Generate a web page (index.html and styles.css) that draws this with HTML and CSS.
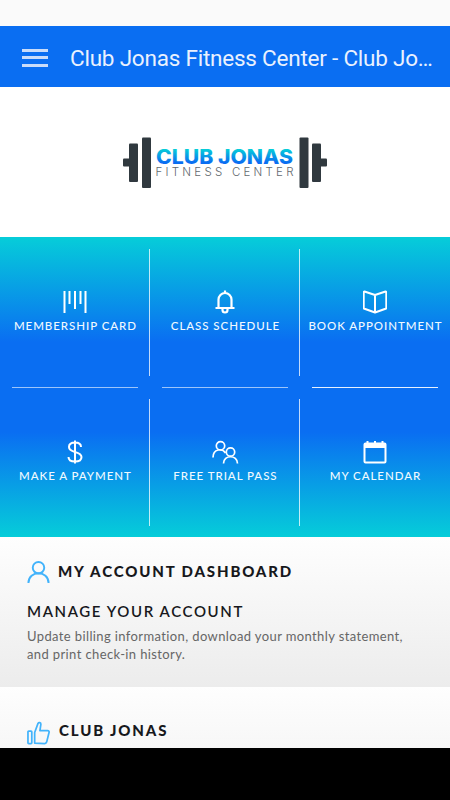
FILE: index.html
```
<!DOCTYPE html>
<html lang="en">
<head>
  <meta charset="UTF-8" />
  <title>Club Jonas Fitness Center</title>
  <meta name="viewport" content="width=device-width, initial-scale=1.0"/>
  <link rel="stylesheet" href="styles.css">
</head>
<body>

  <div class="status-bar"></div>

  <header>
    <button class="menu" aria-label="Menu"><span></span><span></span><span></span></button>
    <div class="title">Club Jonas Fitness Center - Club Jo…</div>
  </header>

  <div class="brand">
    <svg width="206" height="52" viewBox="0 0 206 52">
      <defs>
        <linearGradient id="brandFill" x1="0" y1="0" x2="0" y2="1">
          <stop offset="0.2" stop-color="#06cdd9"/>
          <stop offset="0.75" stop-color="#0a6ef2"/>
        </linearGradient>
      </defs>
      <g fill="#30393f">
        <rect x="1" y="21.500" width="8" height="8" rx="1"/>
        <rect x="7" y="6.500" width="9" height="38.500" rx="1"/>
        <rect x="20" y="0.500" width="9" height="50.500" rx="1"/>
        <rect x="177.500" y="0.500" width="9" height="50.500" rx="1"/>
        <rect x="190" y="6.500" width="9" height="38.500" rx="1"/>
        <rect x="197" y="21.500" width="8" height="8" rx="1"/>
      </g>
      <text class="brand-name" x="34" y="26.500" textLength="137" lengthAdjust="spacingAndGlyphs" fill="url(#brandFill)">CLUB JONAS</text>
      <text class="brand-sub" x="33.500" y="39" textLength="138">FITNESS CENTER</text>
    </svg>
  </div>

  <main>
    <nav class="tiles">
      <a class="tile">
        <svg viewBox="0 0 24 24"><path d="M1.500 1v22M6.500 1v13M12 1v18M17.500 1v13M22.500 1v22"/></svg>
        <span>Membership Card</span>
      </a>
      <a class="tile">
        <svg class="bell" viewBox="0 0 24 24"><path d="M5.500 18V9.500a6.500 6.500 0 0 1 13 0V18M2.500 18h19M12 .500v3M9.500 18.500v1.500a2.500 2.500 0 0 0 5 0v-1.500"/></svg>
        <span>Class Schedule</span>
      </a>
      <a class="tile">
        <svg viewBox="0 0 24 24"><path d="M12 5L1.500 1.500c-.5 0-.8.3-.8.8v15.500c0 .5.300.8.800 1L12 22.500l10.500-3.700c.5-.2.8-.5.8-1V2.300c0-.5-.3-.8-.8-.8zM12 5v17.500"/></svg>
        <span>Book Appointment</span>
      </a>
      <a class="tile">
        <svg viewBox="0 0 24 24"><path d="M18 7c0-3-2.500-4.500-6-4.500S6 4 6 7s2.500 4 6 5 6.500 2 6.500 5-2.500 4.500-6.500 4.500S5.500 20 5.500 17M12 .500v23"/></svg>
        <span>Make a Payment</span>
      </a>
      <a class="tile">
        <svg class="people" viewBox="0 0 28 24"><circle cx="9.500" cy="5.800" r="4.200"/><path d="M2 17.500c0-9 9.500-9.500 12.500-4.500"/><circle cx="19.500" cy="12" r="4.200"/><path d="M12.500 23.500c0-9 14-9 14 0"/></svg>
        <span>Free Trial Pass</span>
      </a>
      <a class="tile">
        <svg viewBox="0 0 24 24"><rect x="1.500" y="3.500" width="21" height="19" rx="1"/><path class="solid" d="M1 3h22v5H1z"/><path d="M4.500 1v3M12 1v3M19.500 1v3"/></svg>
        <span>My Calendar</span>
      </a>
    </nav>

    <section class="panel">
      <h2>
        <svg viewBox="0 0 24 24"><circle cx="12" cy="7.500" r="6"/><path d="M1.500 23.500c0-13.500 21-13.500 21 0"/></svg>
        <span>My Account Dashboard</span>
      </h2>
      <h3>Manage Your Account</h3>
      <p>Update billing information, download your monthly statement,<br>and print check-in history.</p>
    </section>

    <section class="panel club">
      <h2>
        <svg viewBox="0 0 24 24"><rect x="1" y="10" width="4" height="13" rx=".8"/><path d="M8 22.500V11.500L11.500 2c.8-1.500 3-1 3 .8L13.500 9.500h8c1.300 0 1.800.8 1.500 2l-2.500 10c-.3 1-1 1.500-2 1.500z"/></svg>
        <span>Club Jonas</span>
      </h2>
    </section>
  </main>

  <footer></footer>

</body>
</html>
```
FILE: styles.css
```
* {
  box-sizing: border-box;
}

body {
  margin: 0;
  height: 800px;
  display: flex;
  flex-direction: column;
  overflow: hidden;
  background: #fff;
  font-family: Lato, "Open Sans", sans-serif;
}

.status-bar {
  height: 26px;
  flex-shrink: 0;
  background: #fafafa;
}

header {
  height: 61px;
  flex-shrink: 0;
  display: flex;
  align-items: center;
  padding: 2px 10px 0 22px;
  background: #0a6ef2;
}

.menu {
  width: 26px;
  padding: 0;
  border: none;
  background: none;
  display: flex;
  flex-direction: column;
  gap: 4.5px;
}

.menu span {
  height: 3px;
  background: #c9dcfa;
}

.title {
  flex: 1;
  min-width: 0;
  margin-left: 22px;
  font: 22.5px Roboto, sans-serif;
  letter-spacing: -0.22px;
  color: #e9f1fe;
  white-space: nowrap;
}

.brand {
  height: 150px;
  flex-shrink: 0;
  display: flex;
  justify-content: center;
  align-items: center;
  padding-top: 1px;
}

.brand-name {
  font: 800 20px Inter, sans-serif;
}

.brand-sub {
  font: 300 11.5px Inter, sans-serif;
  fill: #62686d;
}

main {
  flex: 1;
  min-height: 0;
  overflow: hidden;
}

.tiles {
  display: grid;
  grid-template-columns: repeat(3, 1fr);
  grid-auto-rows: 150px;
  background: linear-gradient(#06cdd9, #0a6ef2 35%, #0a6ef2 65%, #06cdd9);
}

.tile {
  position: relative;
  display: flex;
  flex-direction: column;
  align-items: center;
  padding-top: 53px;
  color: #f0f9ff;
}

.tile svg {
  width: 24px;
  height: 24px;
  fill: none;
  stroke: #fff;
  stroke-width: 2;
  stroke-linejoin: round;
}

.tile .bell {
  stroke-width: 2.2;
}

.tile .people {
  width: 28px;
  stroke-width: 1.7;
}

.tile .solid {
  fill: #fff;
  stroke: none;
}

.tile span {
  margin-top: 4px;
  font-size: 11.5px;
  line-height: 16px;
  font-weight: 500;
  letter-spacing: 0.95px;
  margin-right: -0.95px;
  text-transform: uppercase;
  white-space: nowrap;
}

/* dividers between tiles */
.tile:not(:nth-child(3n))::after {
  content: "";
  position: absolute;
  top: 12px;
  right: 0;
  width: 1px;
  height: 127px;
  background: rgba(255, 255, 255, 0.75);
}

.tile:nth-child(-n+3)::before {
  content: "";
  position: absolute;
  left: 12px;
  bottom: -1px;
  width: 126px;
  height: 1px;
  background: rgba(255, 255, 255, 0.6);
}

.tile:nth-child(3)::before {
  background: rgba(255, 255, 255, 0.9);
}

.panel {
  height: 150px;
  padding: 23px 27px 0;
  background: linear-gradient(#fefefe, #ececec);
}

.panel h2 {
  display: flex;
  align-items: center;
  gap: 8px;
  margin: 0;
  height: 24px;
  font-size: 15px;
  font-weight: 900;
  letter-spacing: 1.85px;
  text-transform: uppercase;
  color: #17181c;
}

.panel h2 svg {
  width: 23px;
  height: 24px;
  fill: none;
  stroke: #42b3fb;
  stroke-width: 2;
  stroke-linejoin: round;
}

.panel h2 span {
  position: relative;
  top: -1px;
}

.panel h3 {
  margin: 17px 0 0;
  font-size: 15px;
  line-height: 20px;
  font-weight: 600;
  letter-spacing: 1.6px;
  text-transform: uppercase;
  color: #17181c;
}

.panel p {
  margin: 6px 0 0;
  font-size: 13px;
  line-height: 18px;
  letter-spacing: 0.38px;
  white-space: nowrap;
  color: #666;
}

.club {
  padding-top: 34px;
}

.club h2 {
  gap: 9px;
}

.club h2 svg {
  stroke-width: 1.8;
}

.club h2 span {
  top: -3px;
}

footer {
  height: 52.5px;
  flex-shrink: 0;
  background: #000;
}
```
